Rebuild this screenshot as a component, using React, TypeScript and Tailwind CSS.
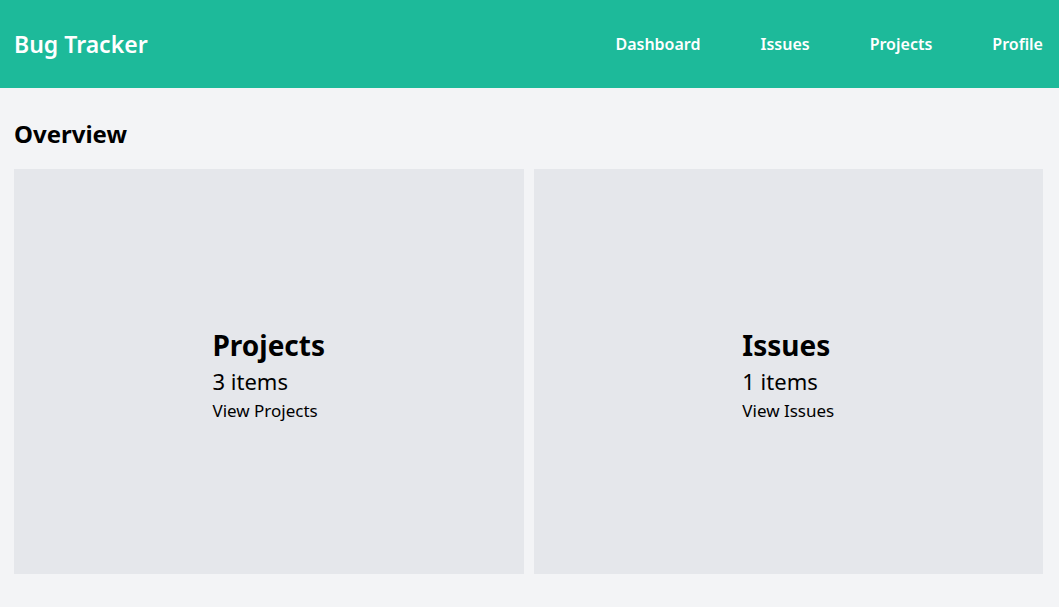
import React from "react";

const links = ["Dashboard", "Issues", "Projects", "Profile"];

const cards = [
  { title: "Projects", count: 3, link: "View Projects" },
  { title: "Issues", count: 1, link: "View Issues" },
];

const App = () => {
  return (
    <div className="min-h-screen bg-[#f3f4f6] text-black" style={{ fontFamily: '"Noto Sans", sans-serif' }}>
      <header className="h-[88px] bg-[#1dba9a] flex items-center justify-between pl-[14px] pr-[16px]">
        <h1 className="text-[23px] font-semibold text-white">Bug Tracker</h1>
        <nav className="flex gap-[60px]">
          {links.map((l) => (
            <a key={l} href="#" className="text-[16px] font-semibold text-white">
              {l}
            </a>
          ))}
        </nav>
      </header>

      <main className="pl-[14px] pr-[16px] pt-[30px]">
        <h2 className="text-[24px] font-bold leading-[32px] mb-[19px]">Overview</h2>
        <div className="grid grid-cols-2 gap-[10px]">
          {cards.map((c) => (
            <div key={c.title} className="h-[405px] bg-[#e5e7eb] flex items-center justify-center">
              <div className="pt-[8px]">
                <div className="text-[28px] font-bold leading-[36px]">{c.title}</div>
                <div className="text-[22px] leading-[28px] mt-[4px]">{c.count} items</div>
                <a href="#" className="text-[17px] leading-[28px] mt-[2px] block">
                  {c.link}
                </a>
              </div>
            </div>
          ))}
        </div>
      </main>
    </div>
  );
};

export default App;
